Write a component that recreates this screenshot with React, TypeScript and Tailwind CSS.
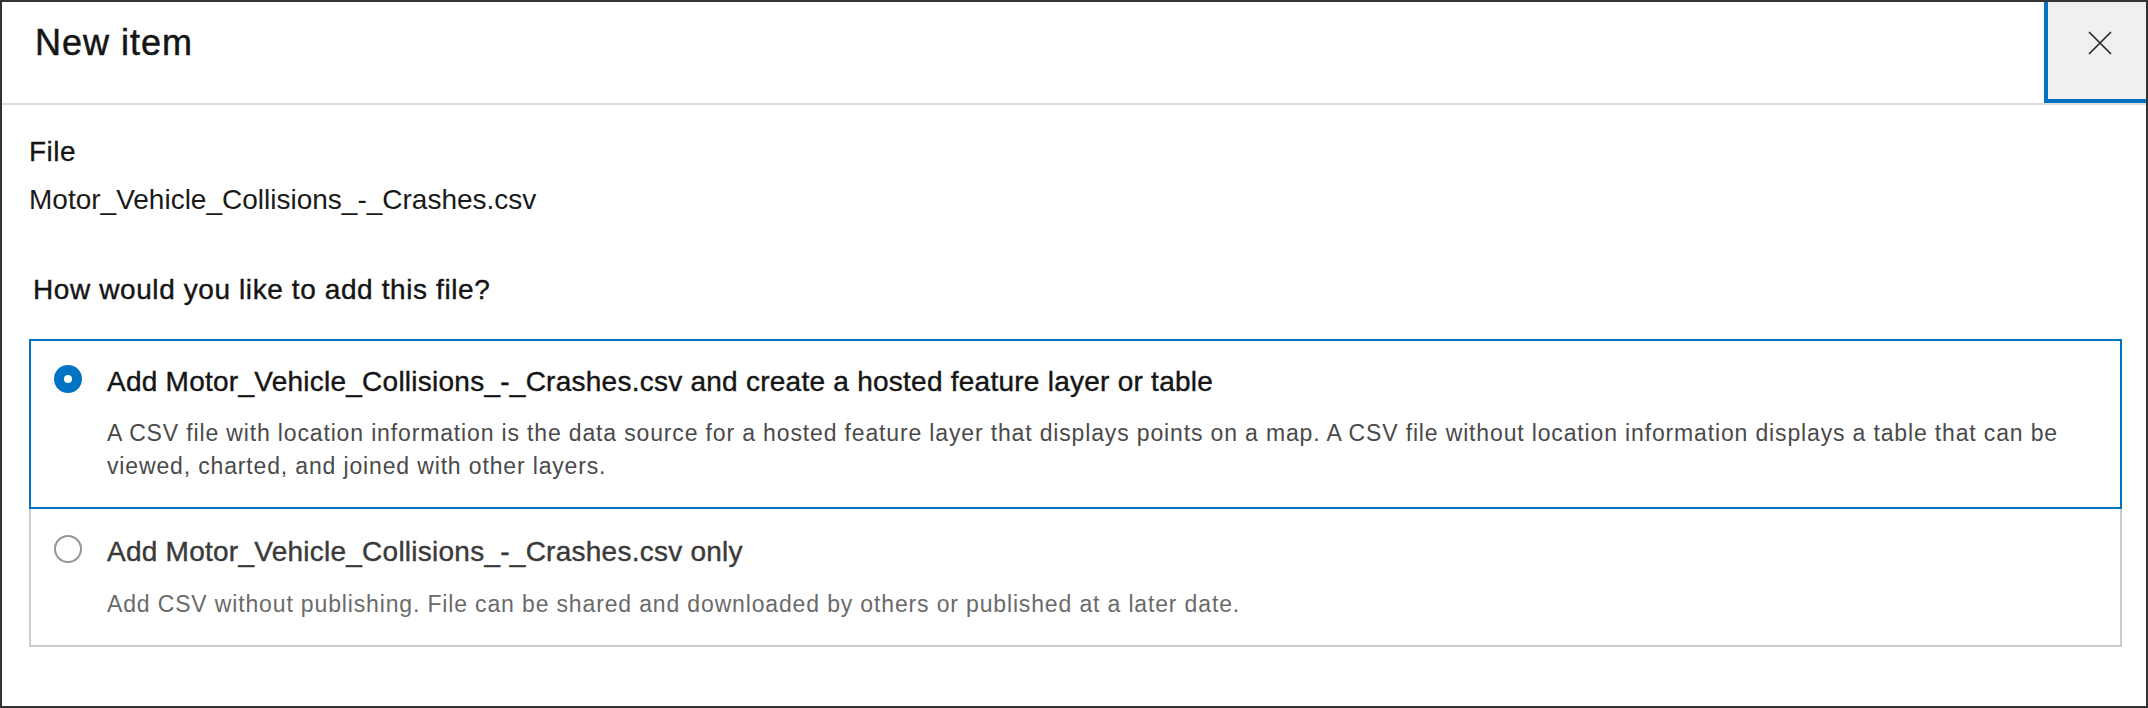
import { useState } from 'react';

const FILE_NAME = 'Motor_Vehicle_Collisions_-_Crashes.csv';

type OptionProps = {
  selected: boolean;
  title: string;
  children: React.ReactNode;
  onSelect: () => void;
  first?: boolean;
};

function Option({ selected, title, children, onSelect, first }: OptionProps) {
  return (
    <div
      onClick={onSelect}
      className={
        selected
          ? 'flex cursor-pointer border-2 border-[#0074c2] pl-[23px] pr-[24px] pt-[23px] pb-[24px]'
          : first
            ? 'flex cursor-pointer border-2 border-[#cccccc] pl-[23px] pr-[24px] pt-[23px] pb-[24px]'
            : 'flex cursor-pointer border-2 border-t-0 border-[#cccccc] pl-[23px] pr-[24px] pt-[25px] pb-[24px]'
      }
    >
      {/* radio */}
      {selected ? (
        <span className="mt-[1px] flex h-[28px] w-[28px] shrink-0 items-center justify-center rounded-full bg-[#0074c2]">
          <span className="h-[8px] w-[8px] rounded-full bg-white" />
        </span>
      ) : (
        <span className="mt-[1px] h-[28px] w-[28px] shrink-0 rounded-full border-2 border-[#959595] bg-white" />
      )}

      <div className="ml-[25px] flex-1">
        <p
          className={
            selected
              ? 'text-[28px] leading-[36px] tracking-[0.25px] text-[#151515] [-webkit-text-stroke:0.4px_#151515]'
              : 'text-[28px] leading-[36px] tracking-[0.25px] text-[#3a3a3a] [-webkit-text-stroke:0.4px_#3a3a3a]'
          }
        >
          {title}
        </p>
        <p
          className={
            selected
              ? 'mt-[17px] text-[23px] leading-[33px] tracking-[0.85px] text-[#4a4a4a]'
              : 'mt-[18px] text-[23px] leading-[33px] tracking-[0.85px] text-[#6a6a6a]'
          }
        >
          {children}
        </p>
      </div>
    </div>
  );
}

export default function App() {
  const [choice, setChoice] = useState<'publish' | 'only'>('publish');

  return (
    <main className="flex h-[708px] w-full flex-col border-2 border-[#333333] bg-white font-['Liberation_Sans',Arial,sans-serif]">
      {/* header */}
      <header className="flex h-[103px] shrink-0 border-b-2 border-[#dedede]">
        <h1 className="flex-1 pl-[33px] pt-[19px] text-[36px] leading-[44px] tracking-[1px] text-[#151515] [-webkit-text-stroke:0.5px_#151515]">
          New item
        </h1>
        <button
          aria-label="Close"
          className="flex w-[102px] items-start justify-start border-b-4 border-l-4 border-[#0074c2] bg-[#f0f0f0] pl-[40px] pt-[29px]"
        >
          <svg width="24" height="24" viewBox="0 0 24 24" fill="none">
            <path d="M1 1L23 23M23 1L1 23" stroke="#2b2b2b" strokeWidth="1.7" />
          </svg>
        </button>
      </header>

      {/* body */}
      <section className="flex flex-col pl-[27px] pr-[24px] pt-[29px]">
        <p className="text-[28px] leading-[36px] tracking-[0.5px] text-[#151515] [-webkit-text-stroke:0.3px_#151515]">
          File
        </p>
        <p className="mt-[12px] text-[28px] leading-[36px] text-[#1a1a1a]">{FILE_NAME}</p>

        <p className="ml-1 mt-[54px] text-[28px] leading-[36px] tracking-[0.6px] text-[#151515] [-webkit-text-stroke:0.4px_#151515]">
          How would you like to add this file?
        </p>

        <div className="mt-[31px] flex flex-col">
          <Option
            selected={choice === 'publish'}
            first
            title={`Add ${FILE_NAME} and create a hosted feature layer or table`}
            onSelect={() => setChoice('publish')}
          >
            A CSV file with location information is the data source for a hosted feature layer that displays points on
            a map. A CSV file without location information displays a table that can be
            <br />
            viewed, charted, and joined with other layers.
          </Option>
          <Option
            selected={choice === 'only'}
            title={`Add ${FILE_NAME} only`}
            onSelect={() => setChoice('only')}
          >
            Add CSV without publishing. File can be shared and downloaded by others or published at a later date.
          </Option>
        </div>
      </section>
    </main>
  );
}
